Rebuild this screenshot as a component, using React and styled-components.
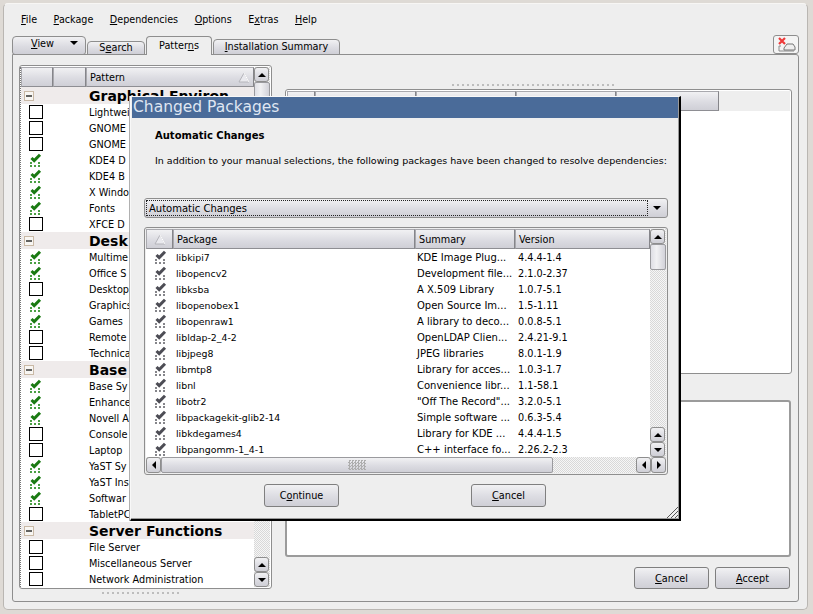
import React from 'react';
import styled, { createGlobalStyle } from 'styled-components';

const GlobalStyle = createGlobalStyle`
  html, body {
    margin: 0;
    padding: 0;
    background: #dedad5;
  }
  * {
    box-sizing: border-box;
  }
`;

const btnGradient = 'linear-gradient(#f1f1f3, #dcdce2 55%, #cfcfd6)';
const checker = 'repeating-conic-gradient(#d8d8d8 0 25%, #f6f6f6 0 50%) 0 0 / 2px 2px';

const Screen = styled.div`
  position: relative;
  width: 813px;
  height: 614px;
  overflow: hidden;
  padding: 3px 5px 4px 3px;
  font-family: "DejaVu Sans", sans-serif;
  font-size: 9.7px;
  color: #000;
  background: #dedad5;
`;

const Window = styled.div`
  height: 100%;
  background: #eeeeee;
  border: 1px solid #b9b6b2;
  border-top-color: #f7f6f4;
  border-radius: 5px;
  padding: 0 8px 0 8px;
  display: flex;
  flex-direction: column;
`;

const MenuBar = styled.div`
  height: 27px;
  padding: 4px 0 0 9px;
  display: flex;
  gap: 16.5px;
  align-items: center;
  font-size: 9.6px;
`;

const TabRow = styled.div`
  height: 24px;
  display: flex;
  align-items: flex-end;
  position: relative;
  z-index: 1;
  margin-bottom: -1px;
`;

const Tab = styled.div`
  width: ${(p) => p.$w}px;
  height: ${(p) => p.$h}px;
  margin-right: ${(p) => p.$gap || 0}px;
  padding-bottom: 2px;
  border: 1px solid #8e8e8e;
  border-bottom: ${(p) => (p.$active ? 'none' : '1px solid #8e8e8e')};
  border-radius: 4px 4px 0 0;
  background: ${(p) => (p.$active ? '#eeeeee' : btnGradient)};
  display: flex;
  align-items: center;
  justify-content: center;
`;

const ViewTab = styled(Tab)`
  justify-content: flex-start;
  padding: 0 7px 5px 18px;
  border-radius: 4px 4px 3px 3px;
  > svg {
    margin-left: auto;
  }
`;

const CloseBox = styled.div`
  position: absolute;
  right: 0;
  bottom: 1px;
  width: 26px;
  height: 19px;
  border: 1px solid #8e8e8e;
  border-radius: 3px;
  background: #f4f4f4;
  display: flex;
  align-items: center;
  justify-content: center;
`;

const MainPanel = styled.div`
  width: 787px;
  height: 548px;
  border: 1px solid #8e8e8e;
  border-radius: 0 3px 3px 3px;
  padding: 10px 6px 12px 6px;
  display: flex;
  gap: 13px;
`;

const LeftCol = styled.div`
  width: 253px;
  position: relative;
`;

const TreeBox = styled.div`
  width: 253px;
  height: 524px;
  border: 1px solid #8e8e8e;
  border-radius: 3px;
  padding: 1px 1px 1px 0;
  display: flex;
  background: #fff;
`;

const TreeMain = styled.div`
  width: 234px;
  display: flex;
  flex-direction: column;
  border-left: 1px dotted #777;
`;

const HeadRow = styled.div`
  display: flex;
  height: ${(p) => p.$h || 20}px;
  flex: none;
`;

const HeadCell = styled.div`
  width: ${(p) => p.$w}px;
  flex: ${(p) => (p.$grow ? 1 : 'none')};
  height: 20px;
  background: ${btnGradient};
  border: 1px solid #a9a9ae;
  border-right-color: #85858a;
  border-bottom-color: #8e8e93;
  display: flex;
  align-items: center;
  justify-content: ${(p) => (p.$center ? 'center' : 'space-between')};
  padding: ${(p) => (p.$center ? '0' : '0 3px')};
  white-space: nowrap;
  overflow: hidden;
`;

const SectionRow = styled.div`
  height: 17px;
  flex: none;
  background: #efebeb;
  display: flex;
  align-items: center;
  padding-left: 3px;
  font-size: 14px;
  font-weight: bold;
  white-space: nowrap;
`;

const Expander = styled.span`
  width: 10px;
  height: 10px;
  border: 1px solid #c9b9a6;
  background: #f8f6f3;
  margin-right: 55px;
  position: relative;
  flex: none;
  &::after {
    content: '';
    position: absolute;
    left: 1px;
    right: 1px;
    top: 3px;
    height: 2px;
    background: #000;
    transform: scaleY(0.6);
  }
`;

const TreeRow = styled.div`
  height: 16px;
  flex: none;
  display: flex;
  align-items: center;
  white-space: nowrap;
`;

const StatusSlot = styled.span`
  width: 68px;
  padding-left: 8px;
  flex: none;
  display: flex;
  align-items: center;
`;

const Box = styled.span`
  width: 14px;
  height: 14px;
  border: 1px solid #000;
  background: #fff;
  display: block;
`;

const VScroll = styled.div`
  width: 16px;
  display: flex;
  flex-direction: column;
  background: ${checker};
`;

const ScrollBtn = styled.div`
  width: ${(p) => p.$w || 15}px;
  height: ${(p) => p.$h || 15}px;
  flex: none;
  border: 1px solid #8e8e8e;
  border-radius: 3px;
  background: ${btnGradient};
  display: flex;
  align-items: center;
  justify-content: center;
`;

const Thumb = styled.div`
  height: ${(p) => p.$h}px;
  flex: none;
  background: linear-gradient(90deg, #dfdfe5, #f1f1f3 40%, #d2d2d9);
  border: 1px solid #9a9a9e;
  border-radius: 2px;
`;

const Spacer = styled.div`
  flex: 1;
`;

const Splitter = styled.div`
  width: ${(p) => p.$w}px;
  height: 2px;
  margin: ${(p) => p.$m};
  background: repeating-linear-gradient(90deg, #bdbdbd 0 2px, transparent 2px 5px);
`;

const RightCol = styled.div`
  flex: none;
  width: 507px;
  display: flex;
  flex-direction: column;
`;

const TopList = styled.div`
  height: 288px;
  margin-top: 3px;
  border: 1px solid #8e8e8e;
  border-radius: 3px;
  background: #fff;
  padding: 1px 1px 2px 1px;
`;

const EmptyHead = styled.div`
  display: flex;
  background: #eeeeee;
`;

const DetailBox = styled.div`
  height: 158px;
  margin: 26px 1px 0 0;
  border: 2px solid #9b9b9b;
  border-radius: 3px;
  background: #fff;
`;

const ButtonRow = styled.div`
  display: flex;
  justify-content: ${(p) => p.$justify || 'flex-end'};
  gap: ${(p) => p.$gap}px;
  padding: ${(p) => p.$pad};
`;

const Button = styled.div`
  width: 75px;
  height: ${(p) => p.$h || 22}px;
  border: 1px solid #7f7f7f;
  border-radius: 3px;
  background: ${btnGradient};
  display: flex;
  align-items: center;
  justify-content: center;
`;

const Dialog = styled.div`
  position: absolute;
  left: 130px;
  top: 96px;
  width: 551px;
  height: 425px;
  background: #eeeeee;
  border: 1px solid #f8f8f8;
  border-right: 2px solid #000;
  border-bottom: 2px solid #000;
  box-shadow: inset -1px -1px 0 #9a9a9a, -1px 0 0 #b0b0b0;
  display: flex;
  flex-direction: column;
`;

const TitleBar = styled.div`
  height: 21px;
  flex: none;
  margin: 0 1px;
  background: #4a6b99;
  color: #dfe6f2;
  font-size: 15.5px;
  line-height: 20px;
  padding-left: 1px;
`;

const DialogHead = styled.div`
  margin: 11px 0 0 24px;
  font-weight: bold;
  font-size: 10px;
  height: 13px;
  line-height: 13px;
`;

const DialogText = styled.div`
  margin: 12px 0 0 24px;
  height: 13px;
  line-height: 13px;
  white-space: nowrap;
  font-size: 9.5px;
`;

const Combo = styled.div`
  margin: 31px 0 0 13px;
  width: 524px;
  height: 20px;
  flex: none;
  border: 1px solid #8e8e8e;
  border-radius: 3px;
  background: ${btnGradient};
  display: flex;
  align-items: center;
  padding: 1px;
`;

const ComboLabel = styled.div`
  flex: 1;
  height: 100%;
  border: 1px dotted #222;
  line-height: 15px;
  padding-left: 2px;
  font-size: 10px;
`;

const ComboArrow = styled.div`
  width: 18px;
  display: flex;
  justify-content: center;
`;

const PackageTable = styled.div`
  margin: 9px 0 0 13px;
  width: 524px;
  height: 248px;
  flex: none;
  border: 1px solid #8e8e8e;
  border-radius: 3px;
  padding: 1px;
  display: flex;
  flex-direction: column;
  background: #eeeeee;
`;

const TableBody = styled.div`
  display: flex;
  height: 228px;
  flex: none;
`;

const TableMain = styled.div`
  width: 504px;
  background: #fff;
  display: flex;
  flex-direction: column;
  overflow: hidden;
`;

const PkgRow = styled.div`
  height: 16px;
  flex: none;
  display: flex;
  align-items: center;
  white-space: nowrap;
`;

const PkgCell = styled.span`
  width: ${(p) => p.$w}px;
  height: 16px;
  line-height: 15px;
  flex: none;
  padding-left: ${(p) => p.$pad}px;
  font-size: ${(p) => p.$size || 9.7}px;
  display: flex;
  align-items: center;
`;

const HScroll = styled.div`
  display: flex;
  height: 16px;
  flex: none;
  background: ${checker};
`;

const HThumb = styled.div`
  width: 392px;
  height: 16px;
  border: 1px solid #9a9a9e;
  border-radius: 2px;
  background: ${btnGradient};
  display: flex;
  align-items: center;
  justify-content: center;
`;

const GripDots = styled.div`
  width: 18px;
  height: 10px;
  background: repeating-conic-gradient(#aeaeae 0 25%, transparent 0 50%) 0 0 / 3px 3px;
`;

const ResizeGrip = styled.svg`
  position: absolute;
  right: 1px;
  bottom: 1px;
`;

const U = styled.span`
  text-decoration: underline;
`;

const Arrow = ({ dir = 'up' }) => {
  const pts = {
    up: '0,5 8,5 4,1',
    down: '0,1 8,1 4,5',
    left: '5,0 5,8 1,4',
    right: '1,0 1,8 5,4',
  }[dir];
  const w = dir === 'up' || dir === 'down' ? 8 : 6;
  const h = dir === 'up' || dir === 'down' ? 6 : 8;
  return (
    <svg width={w} height={h} viewBox={`0 0 ${w} ${h}`}>
      <polygon points={pts} fill="#000" />
    </svg>
  );
};

const SortMark = () => (
  <svg width="12" height="11" viewBox="0 0 12 11">
    <polygon points="6,1 11,10 1,10" fill="#e9e9ee" stroke="#b4b4ba" strokeWidth="1" />
    <line x1="6" y1="1" x2="11" y2="10" stroke="#fff" strokeWidth="1" />
  </svg>
);

const CheckMark = ({ color = '#1a7a12', dots = '#4aa043' }) => (
  <svg width="13" height="14" viewBox="0 0 13 14">
    <path d="M2.5 5 L5.2 7.6 L11 1.8" fill="none" stroke={color} strokeWidth="3" />
    <rect x="1" y="9" width="2" height="2" fill={dots} />
    <rect x="9" y="9" width="2" height="2" fill={dots} />
    <rect x="1" y="12" width="2" height="2" fill={dots} />
    <rect x="5" y="12" width="2" height="2" fill={dots} />
    <rect x="9" y="12" width="2" height="2" fill={dots} />
  </svg>
);

const CloseIcon = () => (
  <svg width="20" height="15" viewBox="0 0 20 15">
    <path d="M5 9 H3 V14 M3 14 H18" fill="none" stroke="#8a8a8a" strokeWidth="1" />
    <path d="M8 11 L11 7 H17 L19 10 V13 H8 Z" fill="#eeeeee" stroke="#777" strokeWidth="1" />
    <path d="M3 1 L9 7 M9 1 L3 7" stroke="#ee3a3a" strokeWidth="2.2" />
  </svg>
);

// the dialog hides the rest of these names, only what shows is kept
const sections = [
  {
    title: 'Graphical Environ',
    rows: [
      ['Lightwei', 0],
      ['GNOME', 0],
      ['GNOME', 0],
      ['KDE4 D', 1],
      ['KDE4 B', 1],
      ['X Windo', 1],
      ['Fonts', 1],
      ['XFCE D', 0],
    ],
  },
  {
    title: 'Desk',
    rows: [
      ['Multime', 1],
      ['Office S', 1],
      ['Desktop', 0],
      ['Graphics', 1],
      ['Games', 1],
      ['Remote', 0],
      ['Technica', 0],
    ],
  },
  {
    title: 'Base',
    rows: [
      ['Base Sy', 1],
      ['Enhance', 1],
      ['Novell A', 1],
      ['Console', 0],
      ['Laptop', 0],
      ['YaST Sy', 1],
      ['YaST Ins', 1],
      ['Softwar', 1],
      ['TabletPC', 0],
    ],
  },
  {
    title: 'Server Functions',
    rows: [
      ['File Server', 0],
      ['Miscellaneous Server', 0],
      ['Network Administration', 0],
    ],
  },
];

const packages = [
  ['libkipi7', 'KDE Image Plug...', '4.4.4-1.4'],
  ['libopencv2', 'Development file...', '2.1.0-2.37'],
  ['libksba', 'A X.509 Library', '1.0.7-5.1'],
  ['libopenobex1', 'Open Source Im...', '1.5-1.11'],
  ['libopenraw1', 'A library to deco...', '0.0.8-5.1'],
  ['libldap-2_4-2', 'OpenLDAP Clien...', '2.4.21-9.1'],
  ['libjpeg8', 'JPEG libraries', '8.0.1-1.9'],
  ['libmtp8', 'Library for acces...', '1.0.3-1.7'],
  ['libnl', 'Convenience libr...', '1.1-58.1'],
  ['libotr2', '"Off The Record"...', '3.2.0-5.1'],
  ['libpackagekit-glib2-14', 'Simple software ...', '0.6.3-5.4'],
  ['libkdegames4', 'Library for KDE ...', '4.4.4-1.5'],
  ['libpangomm-1_4-1', 'C++ interface fo...', '2.26.2-2.3'],
];

const App = () => {
  return (
    <Screen>
      <GlobalStyle />
      <Window>
        <MenuBar>
          <span><U>F</U>ile</span>
          <span><U>P</U>ackage</span>
          <span><U>D</U>ependencies</span>
          <span><U>O</U>ptions</span>
          <span>E<U>x</U>tras</span>
          <span><U>H</U>elp</span>
        </MenuBar>
        <TabRow>
          <ViewTab $w={74} $h={19} $gap={1}>
            <span><U>V</U>iew</span>
            <Arrow dir="down" />
          </ViewTab>
          <Tab $w={58} $h={14} $gap={1}><span>S<U>e</U>arch</span></Tab>
          <Tab $w={66} $h={19} $gap={1} $active><span>Patter<U>n</U>s</span></Tab>
          <Tab $w={127} $h={16}><span><U>I</U>nstallation Summary</span></Tab>
          <CloseBox><CloseIcon /></CloseBox>
        </TabRow>
        <MainPanel>
          <LeftCol>
            <TreeBox>
              <TreeMain>
                <HeadRow>
                  <HeadCell $w={32} $center />
                  <HeadCell $w={33} $center />
                  <HeadCell $grow>
                    <span>Pattern</span>
                    <SortMark />
                  </HeadCell>
                </HeadRow>
                {sections.map((s) => (
                  <React.Fragment key={s.title}>
                    <SectionRow>
                      <Expander />
                      {s.title}
                    </SectionRow>
                    {s.rows.map(([name, on], i) => (
                      <TreeRow key={i}>
                        <StatusSlot>{on ? <CheckMark /> : <Box />}</StatusSlot>
                        {name}
                      </TreeRow>
                    ))}
                  </React.Fragment>
                ))}
              </TreeMain>
              <VScroll>
                <ScrollBtn><Arrow dir="up" /></ScrollBtn>
                <Thumb $h={60} />
                <Spacer />
                <ScrollBtn><Arrow dir="up" /></ScrollBtn>
                <ScrollBtn><Arrow dir="down" /></ScrollBtn>
              </VScroll>
            </TreeBox>
            <Splitter $w={78} $m="3px 0 0 83px" />
          </LeftCol>
          <RightCol>
            <Splitter $w={164} $m="19px 0 0 167px" />
            <TopList>
              <EmptyHead>
                <HeadCell $w={28} $center />
                <HeadCell $w={101} $center />
                <HeadCell $w={100} $center />
                <HeadCell $w={100} $center />
                <HeadCell $w={103} $center />
              </EmptyHead>
            </TopList>
            <DetailBox />
            <ButtonRow $gap={6} $pad="10px 2px 0 0">
              <Button><span><U>C</U>ancel</span></Button>
              <Button><span><U>A</U>ccept</span></Button>
            </ButtonRow>
          </RightCol>
        </MainPanel>
      </Window>

      <Dialog>
        <TitleBar>Changed Packages</TitleBar>
        <DialogHead>Automatic Changes</DialogHead>
        <DialogText>In addition to your manual selections, the following packages have been changed to resolve dependencies:</DialogText>
        <Combo>
          <ComboLabel>Automatic Changes</ComboLabel>
          <ComboArrow><Arrow dir="down" /></ComboArrow>
        </Combo>
        <PackageTable>
          <TableBody>
            <TableMain>
              <HeadRow>
                <HeadCell $w={27} $center><SortMark /></HeadCell>
                <HeadCell $w={242}>Package</HeadCell>
                <HeadCell $w={100}>Summary</HeadCell>
                <HeadCell $w={135}>Version</HeadCell>
              </HeadRow>
              {packages.map(([name, summary, version]) => (
                <PkgRow key={name}>
                  <PkgCell $w={30} $pad={8}><CheckMark color="#4d4d55" dots="#85858a" /></PkgCell>
                  <PkgCell $w={240} $pad={0} $size={9.4}>{name}</PkgCell>
                  <PkgCell $w={100} $pad={1} $size={10}>{summary}</PkgCell>
                  <PkgCell $w={134} $pad={2}>{version}</PkgCell>
                </PkgRow>
              ))}
            </TableMain>
            <VScroll>
              <ScrollBtn><Arrow dir="up" /></ScrollBtn>
              <Thumb $h={26} />
              <Spacer />
              <ScrollBtn><Arrow dir="up" /></ScrollBtn>
              <ScrollBtn><Arrow dir="down" /></ScrollBtn>
            </VScroll>
          </TableBody>
          <HScroll>
            <ScrollBtn $h={16}><Arrow dir="left" /></ScrollBtn>
            <HThumb><GripDots /></HThumb>
            <Spacer />
            <ScrollBtn $h={16}><Arrow dir="left" /></ScrollBtn>
            <ScrollBtn $h={16}><Arrow dir="right" /></ScrollBtn>
          </HScroll>
        </PackageTable>
        <ButtonRow $justify="flex-start" $gap={132} $pad="9px 0 0 133px">
          <Button $h={23}><span>C<U>o</U>ntinue</span></Button>
          <Button $h={23}><span><U>C</U>ancel</span></Button>
        </ButtonRow>
        <ResizeGrip width="12" height="12" viewBox="0 0 12 12">
          <path d="M12 1 L1 12 M12 5 L5 12 M12 9 L9 12" stroke="#555" strokeWidth="1" />
        </ResizeGrip>
      </Dialog>
    </Screen>
  );
};

export default App;
